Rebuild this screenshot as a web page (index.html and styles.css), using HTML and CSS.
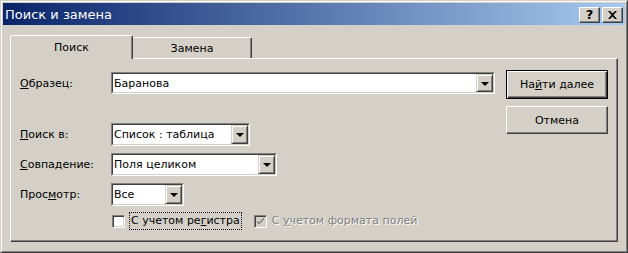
FILE: index.html
```html
<!DOCTYPE html>
<html lang="ru">
<head>
  <meta charset="UTF-8" />
  <title>Поиск и замена</title>
  <link rel="stylesheet" href="styles.css">
</head>
<body>

<div class="window">
  <div class="frame">
    <!-- заголовок окна -->
    <div class="titlebar">
      <span class="title">Поиск и замена</span>
      <div class="caption-btns">
        <button class="cap-btn" title="Справка">?</button>
        <button class="cap-btn" title="Закрыть">
          <svg width="9" height="8" viewBox="0 0 9 8"><path d="M0 0h2l2.5 2.5L7 0h2L5.5 4 9 8H7L4.5 5.5 2 8H0l3.5-4z" fill="#000"/></svg>
        </button>
      </div>
    </div>

    <div class="dialog-body">
      <div class="tabs">
        <div class="tab active">Поиск</div>
        <div class="tab">Замена</div>
      </div>

      <div class="panel">
        <div class="form">
          <div class="row row-first">
            <label class="label"><u>О</u>бразец:</label>
            <div class="combo combo-wide">
              <div class="combo-inner">
                <span class="combo-value">Баранова</span>
                <span class="combo-arrow"><i></i></span>
              </div>
            </div>
          </div>

          <div class="row row-search">
            <label class="label"><u>П</u>оиск в:</label>
            <div class="combo combo-list">
              <div class="combo-inner">
                <span class="combo-value">Список : таблица</span>
                <span class="combo-arrow"><i></i></span>
              </div>
            </div>
          </div>

          <div class="row">
            <label class="label"><u>С</u>овпадение:</label>
            <div class="combo combo-match">
              <div class="combo-inner">
                <span class="combo-value">Поля целиком</span>
                <span class="combo-arrow"><i></i></span>
              </div>
            </div>
          </div>

          <div class="row">
            <label class="label">Прос<u>м</u>отр:</label>
            <div class="combo combo-view">
              <div class="combo-inner">
                <span class="combo-value">Все</span>
                <span class="combo-arrow"><i></i></span>
              </div>
            </div>
          </div>

          <div class="checks">
            <span class="checkbox"></span>
            <span class="check-text focus">С учетом ре<u>г</u>истра</span>
            <span class="checkbox disabled">
              <svg width="9" height="9" viewBox="0 0 9 9"><path d="M1 3.5l2 2 5-5v2l-5 5-2-2z" fill="#808080"/></svg>
            </span>
            <span class="check-text disabled-text">С <u>у</u>четом формата полей</span>
          </div>
        </div>

        <div class="actions">
          <button class="btn btn-default"><span class="btn-face">На<u>й</u>ти далее</span></button>
          <button class="btn"><span class="btn-face">Отмена</span></button>
        </div>
      </div>
    </div>
  </div>
</div>

</body>
</html>
```

FILE: styles.css
```css
body { margin: 0; background: #d4d0c8; font-family: "DejaVu Sans", sans-serif; font-size: 11px; color: #000; }
u { text-decoration: underline; text-underline-offset: 1px; }

.window {
  width: 628px;
  height: 253px;
  box-sizing: border-box;
  border: 1px solid;
  border-color: #d4d0c8 #404040 #404040 #d4d0c8;
  background: #d4d0c8;
}
.frame {
  height: 100%;
  box-sizing: border-box;
  border: 1px solid;
  border-color: #fff #808080 #808080 #fff;
  padding: 1px;
}

/* заголовок */
.titlebar {
  height: 22px;
  display: flex;
  align-items: center;
  justify-content: space-between;
  background: linear-gradient(to right, #0a246a, #a6caf0);
}
.title { color: #fff; font-size: 13px; padding-left: 2px; }
.caption-btns { display: flex; gap: 2px; margin-right: 2px; padding-top: 1px; }
.cap-btn {
  width: 21px;
  height: 16px;
  padding: 0;
  display: flex;
  align-items: center;
  justify-content: center;
  background: #d4d0c8;
  border: 1px solid;
  border-color: #fff #404040 #404040 #fff;
  box-shadow: inset -1px -1px #808080;
  font-family: "DejaVu Sans", sans-serif;
  font-weight: bold;
  font-size: 13px;
  line-height: 1;
  color: #000;
}

.dialog-body { padding: 10px 6px 0 7px; }

/* вкладки */
.tabs { display: flex; height: 23px; align-items: flex-end; }
.tab {
  box-sizing: border-box;
  height: 21px;
  display: flex;
  align-items: center;
  justify-content: center;
  background: #d4d0c8;
  border-top: 1px solid #fff;
  border-left: 1px solid #fff;
  border-right: 1px solid #404040;
  box-shadow: inset -1px 0 #808080;
  border-radius: 2px 2px 0 0;
  padding-top: 1px;
}
.tab.active {
  width: 123px;
  height: 24px;
  margin-bottom: -1px;
  position: relative;
  z-index: 1;
  padding-bottom: 2px;
}
.tab:not(.active) { width: 119px; border-left: none; }

/* панель */
.panel {
  box-sizing: border-box;
  width: 608px;
  height: 184px;
  display: flex;
  border: 1px solid;
  border-color: #fff #404040 #404040 #fff;
  box-shadow: inset -1px -1px #808080;
  padding: 11px 9px 0 9px;
}
.form { flex: 1; }
.row { display: flex; align-items: center; margin-top: 7px; }
.row-first { margin-top: 2px; }
.row-search { margin-top: 29px; }
.label { width: 91px; }

.combo {
  box-sizing: border-box;
  height: 23px;
  border: 1px solid;
  border-color: #808080 #fff #fff #808080;
  display: flex;
}
.row-first .combo { height: 22px; }
.combo-wide { width: 384px; }
.combo-list { width: 139px; }
.combo-match { width: 166px; }
.combo-view { width: 73px; }
.combo-inner {
  flex: 1;
  display: flex;
  border: 1px solid;
  border-color: #404040 #d4d0c8 #d4d0c8 #404040;
  background: #fff;
}
.combo-value { flex: 1; padding-left: 1px; display: flex; align-items: center; white-space: nowrap; overflow: hidden; }
.combo-arrow {
  box-sizing: border-box;
  width: 17px;
  display: flex;
  align-items: center;
  justify-content: center;
  background: #d4d0c8;
  border: 1px solid;
  border-color: #d4d0c8 #404040 #404040 #d4d0c8;
  box-shadow: inset 1px 1px #fff, inset -1px -1px #808080;
}
.combo-arrow i {
  width: 0;
  height: 0;
  border-left: 4px solid transparent;
  border-right: 4px solid transparent;
  border-top: 4px solid #000;
  margin-top: 1px;
}

/* флажки */
.checks { display: flex; align-items: center; height: 18px; margin-top: 6px; padding-left: 92px; }
.checkbox {
  box-sizing: border-box;
  width: 13px;
  height: 13px;
  border: 1px solid;
  border-color: #808080 #fff #fff #808080;
  box-shadow: inset 1px 1px #404040, inset -1px -1px #d4d0c8;
  background: #fff;
  display: flex;
  align-items: center;
  justify-content: center;
}
.checkbox.disabled { background: #d4d0c8; margin-left: 13px; }
.check-text { padding: 1px 1px 2px 1px; margin-left: 5px; }
.focus { outline: 1px dotted #000; }
.disabled-text { color: #808080; text-shadow: 1px 1px #fff; margin-left: 4px; }

/* кнопки */
.actions { width: 102px; display: flex; flex-direction: column; gap: 7px; }
.btn {
  box-sizing: border-box;
  width: 102px;
  height: 28px;
  padding: 0;
  background: #d4d0c8;
  border: 1px solid;
  border-color: #fff #404040 #404040 #fff;
  box-shadow: inset -1px -1px #808080;
  font: inherit;
  color: #000;
  display: flex;
}
.btn-face { flex: 1; display: flex; align-items: center; justify-content: center; }
.btn-default {
  height: 29px;
  border: 1px solid #000;
  box-shadow: inset 1px 1px #fff, inset -1px -1px #404040, inset -2px -2px #808080;
}
```
